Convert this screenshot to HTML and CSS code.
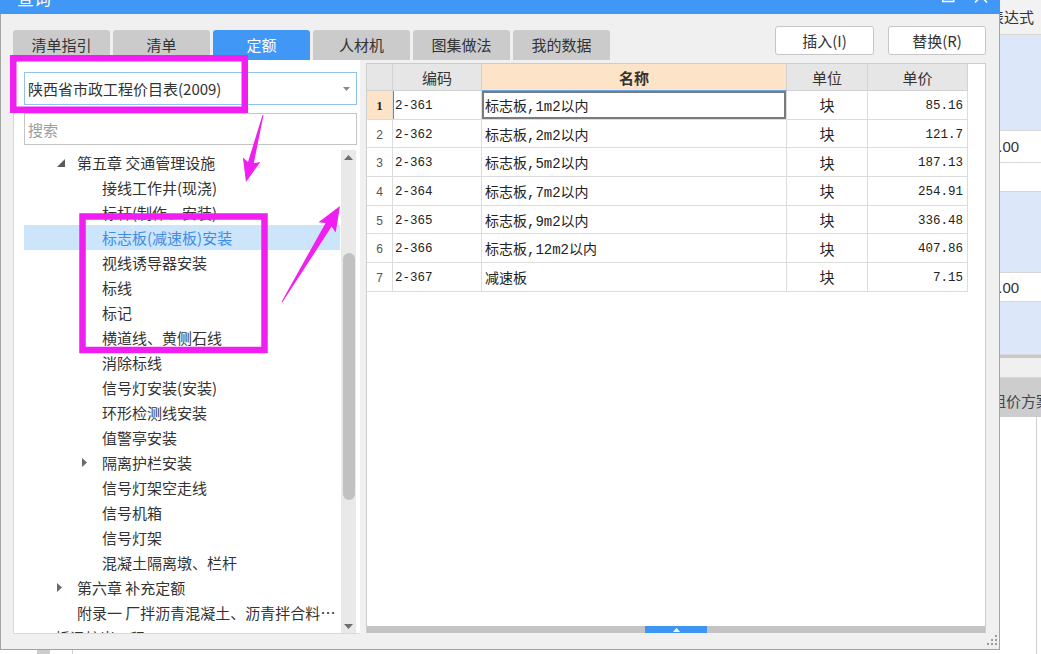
FILE: index.html
```html
<!DOCTYPE html>
<html lang="zh-CN">
<head>
<meta charset="utf-8">
<title>查询</title>
<link rel="stylesheet" href="styles.css">
</head>
<body>
<div class="app">
  <div class="app-main">
    <div class="app-foot"><span class="foot-block"></span><span class="foot-line"></span></div>
  </div>
  <div class="app-side">
    <div class="side-head">表达式</div>
    <div class="side-row blue h96"></div>
    <div class="side-row val h32">1.00</div>
    <div class="side-row h29"></div>
    <div class="side-row blue h81"></div>
    <div class="side-row val h29">1.00</div>
    <div class="side-row blue h53"></div>
    <div class="side-sep"></div>
    <div class="side-gap"></div>
    <div class="side-tab">组价方案</div>
    <div class="side-body"><div class="side-col"></div></div>
  </div>
</div>

<div class="dialog">
  <div class="titlebar">
    <span class="title">查询</span>
    <svg class="win-ctrls" width="52" height="14" viewBox="0 0 52 14">
      <rect x="2.75" y="-12" width="11" height="13.5" fill="none" stroke="#fff" stroke-width="1.5"/>
      <path d="M35 -10L47 2.5M47 -10L35 2.5" stroke="#fff" stroke-width="1.6"/>
    </svg>
  </div>
  <div class="dlg-body">
    <div class="toolbar">
      <div class="tabs">
        <div class="tab">清单指引</div>
        <div class="tab">清单</div>
        <div class="tab active">定额</div>
        <div class="tab">人材机</div>
        <div class="tab">图集做法</div>
        <div class="tab">我的数据</div>
      </div>
      <div class="actions">
        <button class="btn">插入(I)</button>
        <button class="btn btn-2">替换(R)</button>
      </div>
    </div>
    <div class="main">
      <div class="left-panel">
        <div class="select">
          <span class="select-text">陕西省市政工程价目表(2009)</span>
          <svg width="7" height="4" viewBox="0 0 7 4"><path d="M0 0H7L3.5 4Z" fill="#8a8a8a"/></svg>
        </div>
        <div class="search">搜索</div>
        <div class="tree-wrap">
          <div class="tree">
            <div class="node l1"><span class="tw"><svg width="8" height="8" viewBox="0 0 8 8"><path d="M8 0V8H0Z" fill="#5a5a5a"/></svg></span><span class="nt">第五章 交通管理设施</span></div>
            <div class="node l2"><span class="tw"></span><span class="nt">接线工作井(现浇)</span></div>
            <div class="node l2"><span class="tw"></span><span class="nt">标杆(制作、安装)</span></div>
            <div class="node l2 sel"><span class="tw"></span><span class="nt">标志板(减速板)安装</span></div>
            <div class="node l2"><span class="tw"></span><span class="nt">视线诱导器安装</span></div>
            <div class="node l2"><span class="tw"></span><span class="nt">标线</span></div>
            <div class="node l2"><span class="tw"></span><span class="nt">标记</span></div>
            <div class="node l2"><span class="tw"></span><span class="nt">横道线、黄侧石线</span></div>
            <div class="node l2"><span class="tw"></span><span class="nt">消除标线</span></div>
            <div class="node l2"><span class="tw"></span><span class="nt">信号灯安装(安装)</span></div>
            <div class="node l2"><span class="tw"></span><span class="nt">环形检测线安装</span></div>
            <div class="node l2"><span class="tw"></span><span class="nt">值警亭安装</span></div>
            <div class="node l2"><span class="tw"><svg width="6" height="9" viewBox="0 0 6 9"><path d="M0 0L5 4.5L0 9Z" fill="#6a6a6a"/></svg></span><span class="nt">隔离护栏安装</span></div>
            <div class="node l2"><span class="tw"></span><span class="nt">信号灯架空走线</span></div>
            <div class="node l2"><span class="tw"></span><span class="nt">信号机箱</span></div>
            <div class="node l2"><span class="tw"></span><span class="nt">信号灯架</span></div>
            <div class="node l2"><span class="tw"></span><span class="nt">混凝土隔离墩、栏杆</span></div>
            <div class="node l1"><span class="tw"><svg width="6" height="9" viewBox="0 0 6 9"><path d="M0 0L5 4.5L0 9Z" fill="#6a6a6a"/></svg></span><span class="nt">第六章 补充定额</span></div>
            <div class="node l1"><span class="tw"></span><span class="nt">附录一 厂拌沥青混凝土、沥青拌合料配合比表</span></div>
            <div class="node l0"><span class="tw"></span><span class="nt">桥涵护岸工程</span></div>
          </div>
          <div class="vscroll">
            <div class="va"><svg width="9" height="5" viewBox="0 0 9 5"><path d="M0 5H9L4.5 0Z" fill="#6e6e6e"/></svg></div>
            <div class="vthumb"></div>
            <div class="vspace"></div>
            <div class="va"><svg width="9" height="5" viewBox="0 0 9 5"><path d="M0 0H9L4.5 5Z" fill="#6e6e6e"/></svg></div>
          </div>
        </div>
      </div>

      <div class="grid-wrap">
        <div class="grid-area">
          <div class="grid">
            <div class="gh"></div>
            <div class="gh">编码</div>
            <div class="gh gh-name">名称</div>
            <div class="gh">单位</div>
            <div class="gh">单价</div>

            <div class="gc rn rn-cur">1</div>
            <div class="gc code code-cur">2-361</div>
            <div class="gc name name-cur">标志板,1m2以内</div>
            <div class="gc unit">块</div>
            <div class="gc price">85.16</div>

            <div class="gc rn">2</div>
            <div class="gc code">2-362</div>
            <div class="gc name">标志板,2m2以内</div>
            <div class="gc unit">块</div>
            <div class="gc price">121.7</div>

            <div class="gc rn">3</div>
            <div class="gc code">2-363</div>
            <div class="gc name">标志板,5m2以内</div>
            <div class="gc unit">块</div>
            <div class="gc price">187.13</div>

            <div class="gc rn">4</div>
            <div class="gc code">2-364</div>
            <div class="gc name">标志板,7m2以内</div>
            <div class="gc unit">块</div>
            <div class="gc price">254.91</div>

            <div class="gc rn">5</div>
            <div class="gc code">2-365</div>
            <div class="gc name">标志板,9m2以内</div>
            <div class="gc unit">块</div>
            <div class="gc price">336.48</div>

            <div class="gc rn">6</div>
            <div class="gc code">2-366</div>
            <div class="gc name">标志板,12m2以内</div>
            <div class="gc unit">块</div>
            <div class="gc price">407.86</div>

            <div class="gc rn">7</div>
            <div class="gc code">2-367</div>
            <div class="gc name">减速板</div>
            <div class="gc unit">块</div>
            <div class="gc price">7.15</div>
          </div>
        </div>
        <div class="hscroll">
          <div class="hthumb"><svg width="7" height="4" viewBox="0 0 7 4"><path d="M0 4H7L3.5 0Z" fill="#fff"/></svg></div>
        </div>
      </div>
    </div>
    <div class="dlg-foot">
      <svg width="10" height="10" viewBox="0 0 10 10" fill="#9a9a9a">
        <rect x="8" y="0" width="2" height="2"/>
        <rect x="4" y="4" width="2" height="2"/><rect x="8" y="4" width="2" height="2"/>
        <rect x="0" y="8" width="2" height="2"/><rect x="4" y="8" width="2" height="2"/><rect x="8" y="8" width="2" height="2"/>
      </svg>
    </div>
  </div>
</div>

<svg class="annot" width="1041" height="654" viewBox="0 0 1041 654">
  <g fill="none" stroke="#f01ef0" stroke-width="6.5">
    <rect x="13.25" y="58.25" width="231.5" height="51.5"/>
    <rect x="82.5" y="216.5" width="182" height="133.5"/>
  </g>
  <g fill="#f01ef0">
    <polygon points="263.5,115.1 253.8,163.3 260.3,161.9 246,182 242.9,157.5 248,161.9 262.5,114.9"/>
    <polygon points="282.4,302.3 331.6,226.6 335.7,232.6 340,206 318.5,222.2 325.6,223 281.6,301.7"/>
  </g>
</svg>
</body>
</html>
```

FILE: styles.css
```css
* { box-sizing: border-box; margin: 0; padding: 0; }
html, body { width: 1041px; height: 654px; overflow: hidden; }
body {
  position: relative;
  background: #fff;
  color: #333;
  font-family: "Noto Sans CJK SC", "Microsoft YaHei", sans-serif;
}

/* background application */
.app { display: flex; width: 1041px; height: 654px; }
.app-main { flex: 1; display: flex; flex-direction: column; justify-content: flex-end; background: #fff; }
.app-foot { height: 4px; display: flex; }
.foot-block { margin-left: 37px; width: 13px; background: #cdcdcd; }
.foot-line { margin-left: 22px; width: 1px; background: #d0d0d0; }
.app-side { width: 81px; display: flex; flex-direction: column; background: #fff; }
.side-head {
  height: 35px; background: #f2f2f2; border-bottom: 1px solid #d4d4d4;
  padding-left: 29px; font-size: 15px; line-height: 34px; white-space: nowrap; color: #333;
}
.side-row { border-bottom: 1px solid #d8d8d8; background: #fff; }
.side-row.blue { background: #dce8fa; }
.side-row.val { font: 15px "Liberation Sans", sans-serif; color: #333; padding-left: 30px; display: flex; align-items: center; }
.h96 { height: 96px; } .h32 { height: 32px; } .h29 { height: 29px; } .h81 { height: 81px; } .h53 { height: 53px; }
.side-sep { height: 3px; background: #c9c9c9; }
.side-gap { height: 20px; background: #f0f0f0; border-bottom: 1px solid #d6d6d6; }
.side-tab {
  height: 39px; background: #cdcdcd; padding: 6px 0 0 31px;
  font-size: 15px; line-height: 33px; color: #3a4656; white-space: nowrap;
}
.side-body { flex: 1; background: #fff; }
.side-col { width: 77px; height: 100%; border-right: 1px solid #cfcfcf; }

/* dialog window */
.dialog {
  position: absolute; left: 0; top: 0;
  width: 1000px; height: 650px;
  display: flex; flex-direction: column;
}
.titlebar {
  height: 14px; background: #4197f5;
  display: flex; align-items: flex-end; overflow: hidden; padding-left: 17px;
}
.title { font-size: 17px; line-height: 17px; color: #fff; margin-bottom: 8px; }
.win-ctrls { margin-left: auto; margin-right: 8px; align-self: flex-start; }

.dlg-body {
  flex: 1; display: flex; flex-direction: column;
  background: #f0f0f0;
  border: 1px solid #a3a3a3; border-top: none;
  padding: 0 13px 0 12px;
}
.toolbar { height: 46px; display: flex; justify-content: space-between; }
.tabs { display: flex; gap: 3px; align-self: flex-end; }
.tab {
  width: 97px; height: 30px; border-radius: 3px 3px 0 0;
  background: #cbcbcb; color: #333;
  font-size: 15px; line-height: 30px; text-align: center;
}
.tab.active { background: #4197f5; color: #fff; }
.actions { display: flex; gap: 14px; margin-top: 12px; height: 29px; }
.btn {
  width: 99px; height: 29px; background: #fff;
  border: 1px solid #c6c6c6; border-radius: 3px;
  font: 15px "Noto Sans CJK SC", sans-serif; color: #333;
}
.btn-2 { width: 98px; }

.main { height: 574px; display: flex; gap: 6px; }

/* left tree panel */
.left-panel {
  width: 347px; background: #fff;
  border-left: 1px solid #d9d9d9; border-bottom: 1px solid #d9d9d9;
  padding: 12px 3px 0 10px;
  display: flex; flex-direction: column;
}
.select {
  height: 33px; border: 1px solid #8fc1f2;
  display: flex; align-items: center; padding: 0 6px 0 3px;
  font-size: 15px; color: #333;
}
.select-text { flex: 1; white-space: nowrap; }
.search {
  margin-top: 8px; height: 32px; border: 1px solid #c4c4c4;
  display: flex; align-items: center; padding-left: 3px;
  font-size: 15px; color: #9c9c9c;
}
.tree-wrap { margin-top: 5px; flex: 1; display: flex; min-height: 0; }
.tree { flex: 1; min-width: 0; overflow: hidden; }
.node {
  height: 25px; display: flex; align-items: center;
  font-size: 15px; white-space: nowrap; color: #333;
}
.node.sel { background: #cce5fb; color: #3d8de6; }
.l0 { padding-left: 11px; }
.l1 { padding-left: 33px; }
.l2 { padding-left: 58px; }
.tw { width: 20px; flex: none; display: flex; align-items: center; }
.nt { flex: 1; min-width: 0; overflow: hidden; text-overflow: ellipsis; }

.vscroll {
  width: 15px; margin: 0 1px; background: #e9e9e9;
  display: flex; flex-direction: column; align-items: center;
}
.va { height: 14px; width: 15px; display: flex; align-items: center; justify-content: center; }
.vthumb { width: 12px; height: 247px; margin-top: 89px; border-radius: 6px; background: #c1c1c1; }
.vspace { flex: 1; }

/* data grid */
.grid-wrap {
  width: 620px; margin: 3px 0 1px;
  background: #fff; border: 1px solid #cdcdcd; border-bottom: none;
  display: flex; flex-direction: column;
}
.grid-area { flex: 1; }
.grid {
  display: grid;
  grid-template-columns: 26px 89px 305px 81px 100px;
  grid-template-rows: 27px;
  grid-auto-rows: 28.7px;
}
.gh {
  background: #e6e6e6;
  border-right: 1px solid #d2d2d2; border-bottom: 1px solid #d2d2d2;
  display: flex; align-items: center; justify-content: center;
  font-size: 15px; color: #333;
}
.gh-name { background: #fde4c9; font-weight: bold; border-bottom: 1px solid #6aa6ea; }
.gc {
  border-right: 1px solid #dcdcdc; border-bottom: 1px solid #dcdcdc;
  display: flex; align-items: center; white-space: nowrap; overflow: hidden;
  color: #222;
}
.rn { justify-content: center; padding-top: 2px; font: 12px "Liberation Sans", sans-serif; color: #555; }
.rn-cur { background: #fde4c9; font: bold 13px "Liberation Serif", serif; color: #222; }
.code { padding: 2px 0 0 2px; font: 12.5px "Liberation Mono", monospace; }
.code-cur { box-shadow: inset 1px 0 0 #4a90e2; }
.name { padding-left: 3px; font: 14px "Liberation Mono", "Noto Sans CJK SC", monospace; }
.name-cur { box-shadow: inset 0 0 0 2px #7b7b7b; }
.unit { justify-content: center; font-size: 15px; }
.price { justify-content: flex-end; padding: 2px 4px 0 0; font: 12.5px "Liberation Mono", monospace; }

.hscroll { height: 7px; background: #c3c3c3; display: flex; }
.hthumb {
  margin-left: 278px; width: 62px; background: #3f95f4;
  display: flex; align-items: center; justify-content: center;
}

.dlg-foot {
  flex: 1; display: flex; justify-content: flex-end; align-items: flex-end;
  margin-right: -11px; padding-bottom: 4px;
}

/* annotation overlay */
.annot { position: absolute; left: 0; top: 0; pointer-events: none; }
```
